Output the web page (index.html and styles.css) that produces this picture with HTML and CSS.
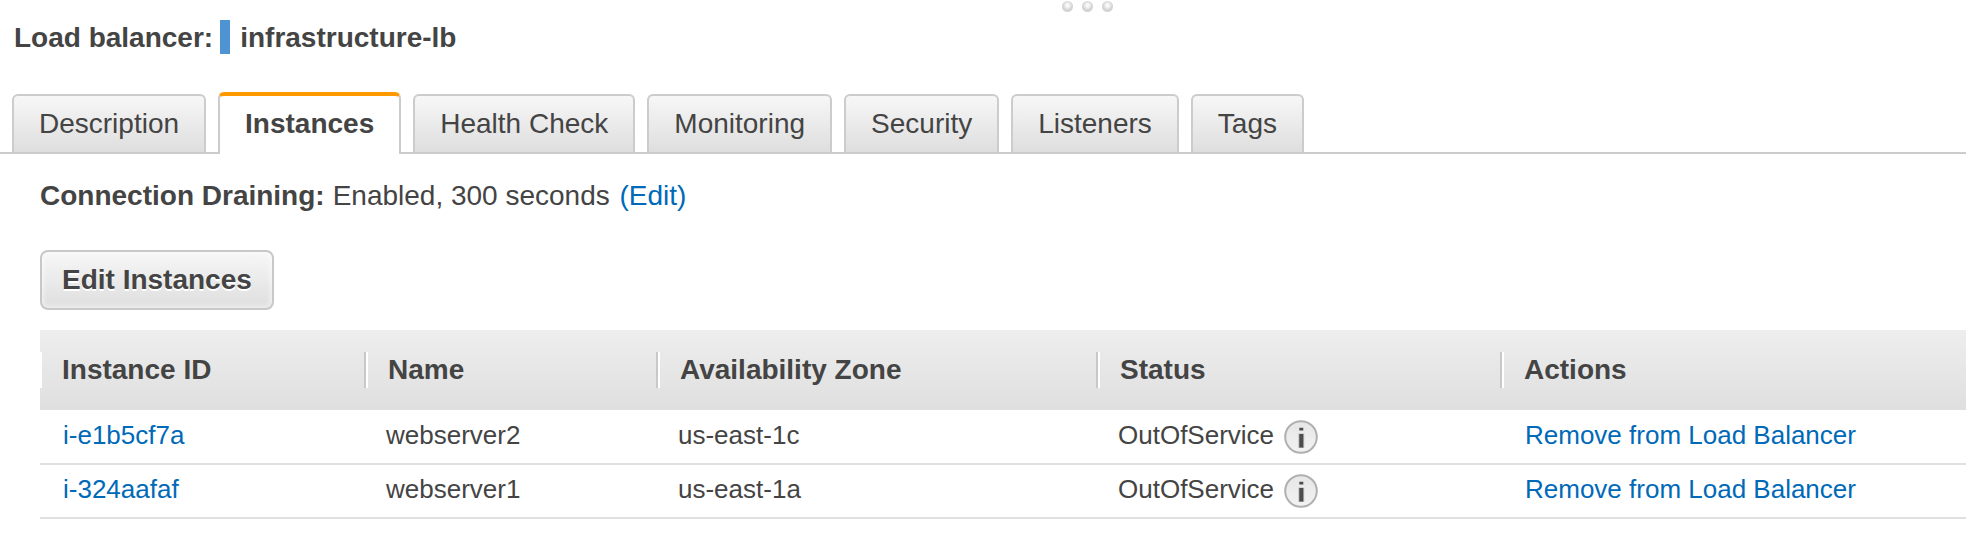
FILE: index.html
```html
<!DOCTYPE html>
<html lang="en">
<head>
<meta charset="utf-8">
<title>Load balancer: infrastructure-lb</title>
<link rel="stylesheet" href="styles.css">
</head>
<body>
<svg class="symbols" width="0" height="0" aria-hidden="true">
  <defs>
    <linearGradient id="info-fill" x1="0" y1="0" x2="0" y2="1">
      <stop offset="0" stop-color="#e6e6e6"/>
      <stop offset="1" stop-color="#f2f2f2"/>
    </linearGradient>
    <symbol id="info" viewBox="0 0 34 34">
      <circle cx="17" cy="17" r="15.8" fill="url(#info-fill)" stroke="#b0b0b0" stroke-width="2"/>
      <path d="M14.4 13.5h5.800v14.500h-5.800z" fill="#bdbdbd"/>
      <path d="M15.300 7.800h4v2.800h-4zM15.300 14h4v13.600h-4z" fill="#4c4c4c"/>
    </symbol>
  </defs>
</svg>
<div class="grip" aria-hidden="true"><span class="dot"></span><span class="dot"></span><span class="dot"></span></div>
<h1 class="title"><span class="title-text">Load balancer:</span><span class="marker"></span><span class="title-text">infrastructure-lb</span></h1>
<nav class="tabs" role="tablist">
  <button class="tab" type="button" role="tab">Description</button>
  <button class="tab tab-active" type="button" role="tab" aria-selected="true">Instances</button>
  <button class="tab" type="button" role="tab">Health Check</button>
  <button class="tab" type="button" role="tab">Monitoring</button>
  <button class="tab" type="button" role="tab">Security</button>
  <button class="tab" type="button" role="tab">Listeners</button>
  <button class="tab" type="button" role="tab">Tags</button>
</nav>
<main class="panel">
  <p class="draining"><strong>Connection Draining:</strong><span>Enabled, 300 seconds <a href="#edit">(Edit)</a></span></p>
  <button class="edit" type="button">Edit Instances</button>
  <table class="grid">
    <colgroup><col class="col-id"><col class="col-name"><col class="col-zone"><col class="col-status"><col></colgroup>
    <thead>
      <tr>
        <th scope="col"><div class="head">Instance ID</div></th>
        <th scope="col"><div class="head">Name</div></th>
        <th scope="col"><div class="head">Availability Zone</div></th>
        <th scope="col"><div class="head">Status</div></th>
        <th scope="col"><div class="head">Actions</div></th>
      </tr>
    </thead>
    <tbody>
      <tr>
        <td><a href="#i-e1b5cf7a">i-e1b5cf7a</a></td>
        <td>webserver2</td>
        <td>us-east-1c</td>
        <td><div class="status">OutOfService<button class="info" type="button" aria-label="Status details"><svg width="34" height="34"><use href="#info"/></svg></button></div></td>
        <td><a href="#remove">Remove from Load Balancer</a></td>
      </tr>
      <tr>
        <td><a href="#i-324aafaf">i-324aafaf</a></td>
        <td>webserver1</td>
        <td>us-east-1a</td>
        <td><div class="status">OutOfService<button class="info" type="button" aria-label="Status details"><svg width="34" height="34"><use href="#info"/></svg></button></div></td>
        <td><a href="#remove">Remove from Load Balancer</a></td>
      </tr>
    </tbody>
  </table>
</main>
</body>
</html>
```

FILE: styles.css
```css
* {
  box-sizing: border-box;
}

body {
  margin: 0;
  background: #fff;
  color: #444;
  font: 28px/32px "Liberation Sans", Arial, sans-serif;
}

a {
  color: #0069b8;
  text-decoration: none;
}

button {
  margin: 0;
  color: inherit;
  font: inherit;
  cursor: pointer;
}

.symbols {
  position: absolute;
}

/* Splitter handle */
.grip {
  display: flex;
  gap: 9px;
  padding: 1px 0 0 54%;
}

.dot {
  width: 11px;
  height: 11px;
  border-radius: 50%;
  background: radial-gradient(circle at 50% 40%, #fff 0, #f4f4f4 20%, #d2d2d2 55%);
}

.title {
  display: flex;
  align-items: center;
  margin: 8px 0 38px;
  padding-left: 14px;
  font-size: 28px;
}

.title-text {
  padding-top: 2px;
}

.marker {
  width: 10px;
  height: 34px;
  margin: 0 10px 0 7px;
  background: #4f94d2;
}

.tabs {
  display: flex;
  align-items: flex-end;
  gap: 12px;
  padding-left: 12px;
  border-bottom: 2px solid #ccc;
}

.tab {
  padding: 12px 25px;
  border: 2px solid #ccc;
  border-bottom: 0;
  border-radius: 6px 6px 0 0;
  background: linear-gradient(#f7f7f7, #dedede);
  white-space: nowrap;
}

.tab-active {
  margin-bottom: -2px;
  border-top: 4px solid #ff9900;
  padding-bottom: 14px;
  background: #fff;
  font-weight: bold;
}

.panel {
  padding: 26px 0 0 40px;
}

.draining {
  display: flex;
  gap: 8px;
  margin: 0 0 38px;
}

.draining a {
  margin-left: 2px;
}

.edit {
  display: block;
  padding: 12px 20px;
  border: 2px solid #c8c8c8;
  border-radius: 8px;
  background: linear-gradient(#f7f7f7, #dedede);
  box-shadow: inset 0 0 4px 2px rgba(255, 255, 255, 0.5);
  font-weight: bold;
  text-shadow: 0 2px 0 #fff;
}

.grid {
  width: 100%;
  margin-top: 20px;
  border-collapse: collapse;
  table-layout: fixed;
}

.col-id {
  width: 326px;
}

.col-name {
  width: 292px;
}

.col-zone {
  width: 440px;
}

.col-status {
  width: 404px;
}

.grid thead {
  background: linear-gradient(#eee, #dfdfdf);
}

.grid th {
  padding: 22px 0;
  text-align: left;
}

.head {
  padding: 2px 20px;
  border-left: 2px solid #fff;
  border-right: 2px solid #c8c8c8;
}

.grid th:last-child .head {
  border-right: 0;
}

.grid td {
  height: 54px;
  padding: 0 0 4px 20px;
  border-bottom: 2px solid #e0e0e0;
  font-size: 26px;
}

.grid td a {
  padding-left: 3px;
}

.status {
  display: flex;
  align-items: center;
  gap: 10px;
}

.info {
  display: flex;
  margin-top: 4px;
  padding: 0;
  border: 0;
  background: none;
}
```
